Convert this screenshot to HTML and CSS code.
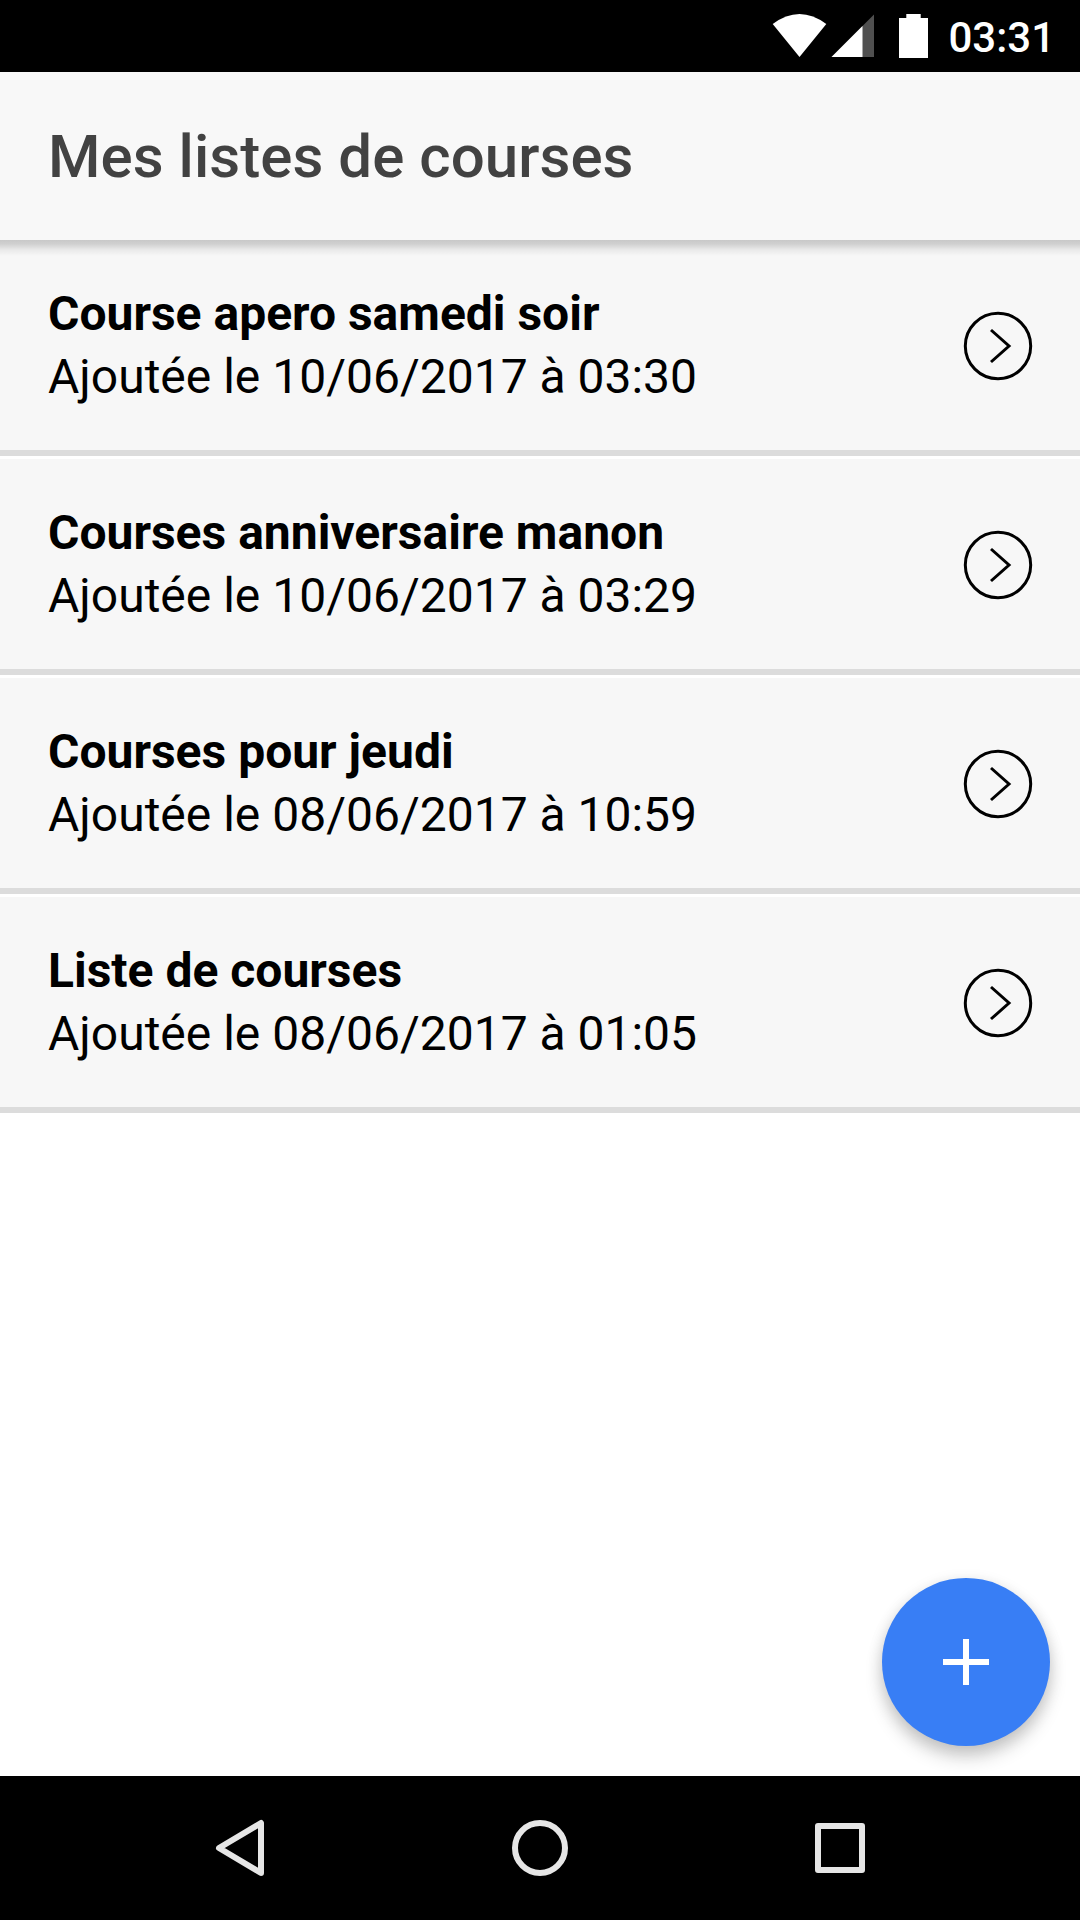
FILE: index.html
```html
<!DOCTYPE html>
<html lang="fr">
<head>
<meta charset="utf-8">
<title>Mes listes de courses</title>
<link rel="stylesheet" href="styles.css">
</head>
<body>
<div class="status">
<svg class="status-icons" width="170" height="72" viewBox="0 0 170 72" fill="#fff"><path d="M12.7 24Q39.500 4 66.300 24L39.500 57Z"/><path d="M114 14.500V57H71.500Z" fill="#505050"/><path d="M102.500 26V57H71.500Z"/><path d="M139 18H146.300V14H160.700V18H168V58H139Z"/></svg>
<span class="clock">03:31</span>
</div>
<header class="toolbar"><h1 class="title">Mes listes de courses</h1></header>
<main class="content">
<ul class="list">
<li class="item"><div class="text"><strong class="name">Course apero samedi soir</strong><span class="date">Ajoutée le 10/06/2017 à 03:30</span></div><svg class="arrow" viewBox="0 0 70 70"><circle cx="35" cy="35" r="32.7"/><path d="M28 19L46 35L28 51"/></svg></li>
<li class="item"><div class="text"><strong class="name">Courses anniversaire manon</strong><span class="date">Ajoutée le 10/06/2017 à 03:29</span></div><svg class="arrow" viewBox="0 0 70 70"><circle cx="35" cy="35" r="32.7"/><path d="M28 19L46 35L28 51"/></svg></li>
<li class="item"><div class="text"><strong class="name">Courses pour jeudi</strong><span class="date">Ajoutée le 08/06/2017 à 10:59</span></div><svg class="arrow" viewBox="0 0 70 70"><circle cx="35" cy="35" r="32.7"/><path d="M28 19L46 35L28 51"/></svg></li>
<li class="item"><div class="text"><strong class="name">Liste de courses</strong><span class="date">Ajoutée le 08/06/2017 à 01:05</span></div><svg class="arrow" viewBox="0 0 70 70"><circle cx="35" cy="35" r="32.7"/><path d="M28 19L46 35L28 51"/></svg></li>
</ul>
<button class="fab" aria-label="Ajouter"><svg width="48" height="48" viewBox="0 0 48 48"><path d="M24 1V47M1 24H47"/></svg></button>
</main>
<nav class="navbar">
<svg viewBox="0 0 60 60"><path d="M51 5V55L9 30Z"/></svg>
<svg viewBox="0 0 60 60"><circle cx="30" cy="30" r="25"/></svg>
<svg viewBox="0 0 60 60"><rect x="8" y="8" width="44" height="44"/></svg>
</nav>
</body>
</html>
```
FILE: styles.css
```css
* { box-sizing: border-box; }
body { margin: 0; width: 1080px; height: 1920px; display: flex; flex-direction: column; font-family: Roboto, sans-serif; background: #fff; overflow: hidden; }
.status { height: 72px; flex: none; background: #000; color: #fff; display: flex; justify-content: flex-end; align-items: center; padding-right: 25px; }
.status-icons { margin-right: 18px; }
.clock { font-size: 42px; font-weight: 500; line-height: 68px; padding-top: 4px; }
.toolbar { height: 168px; flex: none; background: #f8f8f8; display: flex; align-items: center; padding-left: 48px; position: relative; z-index: 1; }
.toolbar::after { content: ""; position: absolute; left: 0; right: 0; top: 100%; height: 16px; background: linear-gradient(rgba(0,0,0,.19), rgba(0,0,0,.155) 25%, rgba(0,0,0,.06) 60%, rgba(0,0,0,0)); }
.title { margin: 0; font-size: 60px; font-weight: 500; letter-spacing: .05px; color: #424242; }
.content { flex: 1; position: relative; }
.list { list-style: none; margin: 0; padding: 0; }
.item { height: 219px; display: flex; align-items: center; justify-content: space-between; padding: 0 47px 0 48px; background: #f7f7f7; border-top: 3px solid #fff; border-bottom: 6px solid #dcdcdc; }
.item:first-child { height: 216px; border-top: 0; }
.text { display: flex; flex-direction: column; font-size: 48px; line-height: 63px; color: #000; }
.name { font-weight: 700; }
.arrow { width: 70px; height: 70px; margin-top: 2px; fill: none; stroke: #000; stroke-width: 3; }
.fab { position: absolute; right: 30px; bottom: 30px; width: 168px; height: 168px; padding: 0; border: 0; border-radius: 50%; background: #387ef5; display: flex; align-items: center; justify-content: center; box-shadow: 0 12px 18px rgba(0,0,0,.16), 0 4px 15px rgba(0,0,0,.13); }
.fab path { stroke: #fff; stroke-width: 6; }
.navbar { height: 144px; flex: none; background: #000; display: flex; align-items: center; justify-content: center; gap: 240px; }
.navbar svg { width: 60px; height: 60px; fill: none; stroke: #e6e6e6; stroke-width: 6; stroke-linejoin: round; }
```
